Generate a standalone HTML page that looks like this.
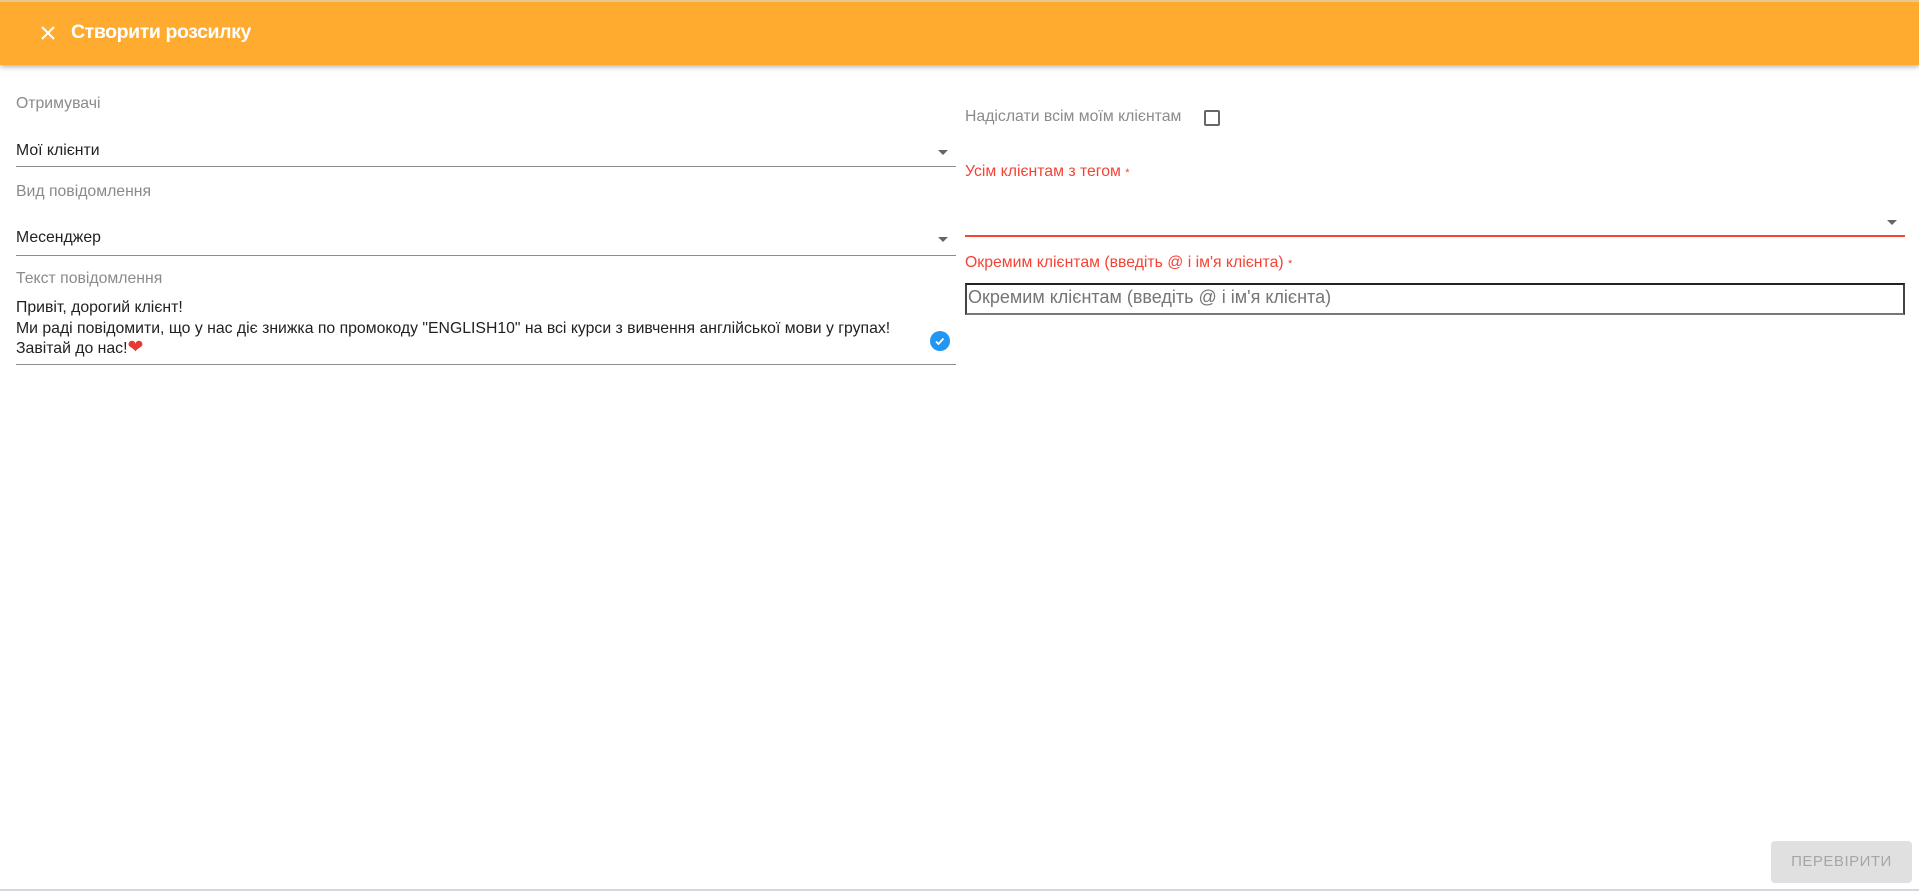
<!DOCTYPE html>
<html><head><meta charset="utf-8"><style>
*{box-sizing:border-box;margin:0;padding:0}
body{width:1919px;height:891px;overflow:hidden;background:#fff;font-family:"Liberation Sans",sans-serif;position:relative;color:#212121}
.hdr{position:absolute;left:0;top:0;width:1919px;height:65px;background:#ffab30;box-shadow:0 2px 5px rgba(0,0,0,.3);border-top:2px solid #e8c88f}
.hdr .t{position:absolute;left:71px;top:19px;color:#fff;font-size:19.5px;font-weight:bold;letter-spacing:-.4px}
.a{position:absolute;font-size:15.8px;white-space:nowrap}
.lbl{color:#8a8a8a}
.line{position:absolute;height:1px;background:#8c8c8c}
.arr{position:absolute;width:0;height:0;border-left:5px solid transparent;border-right:5px solid transparent;border-top:5px solid #666}
.red{color:#f44336}
</style></head><body>
<div class="hdr">
<svg style="position:absolute;left:40px;top:23px" width="16" height="16" viewBox="0 0 16 16"><path d="M2 2L14 14M14 2L2 14" stroke="#fff" stroke-width="2"/></svg>
<div class="t">Створити розсилку</div></div>

<div class="a lbl" style="left:16px;top:95px">Отримувачі</div>
<div class="a" style="left:16px;top:142px">Мої клієнти</div>
<div class="arr" style="left:938px;top:150px"></div>
<div class="line" style="left:16px;top:166px;width:940px"></div>

<div class="a lbl" style="left:16px;top:183px">Вид повідомлення</div>
<div class="a" style="left:16px;top:229px">Месенджер</div>
<div class="arr" style="left:938px;top:237px"></div>
<div class="line" style="left:16px;top:255px;width:940px"></div>

<div class="a lbl" style="left:16px;top:270px">Текст повідомлення</div>
<div class="a" style="left:16px;top:298px;line-height:20.5px">Привіт, дорогий клієнт!<br>Ми раді повідомити, що у нас діє знижка по промокоду "ENGLISH10" на всі курси з вивчення англійської мови у групах!<br>Завітай до нас!<span style="color:#e53935;font-size:19px;line-height:16px">❤</span></div>
<svg style="position:absolute;left:930px;top:331px" width="20" height="20" viewBox="0 0 20 20"><circle cx="10" cy="10" r="10" fill="#2196f3"/><path d="M6 10.5l2.5 2.5 5-5.5" stroke="#fff" stroke-width="1.8" fill="none"/></svg>
<div class="line" style="left:16px;top:364px;width:940px"></div>

<div class="a lbl" style="left:965px;top:108px">Надіслати всім моїм клієнтам</div>
<div style="position:absolute;left:1204px;top:110px;width:16px;height:16px;border:2px solid #666;border-radius:2px"></div>

<div class="a red" style="left:965px;top:163px">Усім клієнтам з тегом <span style="font-size:11px">*</span></div>
<div class="arr" style="left:1887px;top:220px"></div>
<div style="position:absolute;left:965px;top:235px;width:940px;height:2px;background:#f44336"></div>

<div class="a red" style="left:965px;top:254px">Окремим клієнтам (введіть @ і ім'я клієнта) <span style="font-size:11px">*</span></div>
<div style="position:absolute;left:965px;top:283px;width:940px;height:32px;border:2px solid #222;border-bottom-color:#777;border-left-color:#444;border-right-color:#444"></div>
<div class="a" style="left:968px;top:287px;font-size:18px;color:#757575">Окремим клієнтам (введіть @ і ім'я клієнта)</div>

<div style="position:absolute;left:1771px;top:841px;width:141px;height:42px;background:#e0e0e0;border-radius:4px;color:#a6a6a6;font-size:15px;text-align:center;line-height:42px;letter-spacing:.5px">ПЕРЕВІРИТИ</div>
<div style="position:absolute;left:0;top:889px;width:1919px;height:2px;background:#d6d6e0"></div>
</body></html>
